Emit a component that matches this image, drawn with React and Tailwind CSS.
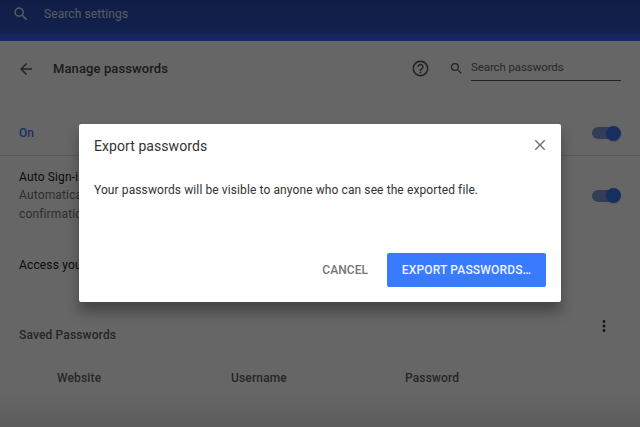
import {
  MdArrowBack,
  MdClose,
  MdHelpOutline,
  MdMoreVert,
  MdSearch,
} from "react-icons/md";

const Toggle = () => (
  <div className="flex h-4 w-[30px] items-center rounded-full">
    <div className="flex h-3 w-[28px] items-center justify-end rounded-full bg-[#8099d5]">
      <div className="-mr-[1px] size-[15px] shrink-0 rounded-full bg-[#3b75ee] shadow-sm" />
    </div>
  </div>
);

const SettingsPage = () => {
  return (
    <div className="h-[427px] bg-white text-[12px] text-[#222]">
      {/* Toolbar */}
      <header className="flex h-[34px] items-center bg-linear-to-b from-[#294ab0] to-[#2d52c0] pb-[6px] pl-3 text-[#dce3f5]">
        <MdSearch size={18} />
        <span className="ml-[14px] text-[12px] leading-none tracking-[0.1px]">Search settings</span>
      </header>
      <div className="h-[7px] bg-[#3a62ff]" />

      {/* Page title */}
      <div className="flex h-[55px] items-center pl-[17px] text-[#5a5a5a]">
        <MdArrowBack size={18} />
        <h1 className="ml-[18px] w-[359px] text-[13px] font-medium tracking-[0.1px] text-[#444]">
          Manage passwords
        </h1>
        <MdHelpOutline size={19} className="-ml-[1px]" />
        <MdSearch size={15} className="ml-[19px]" />
        <div className="ml-[7px] h-[24px] w-[150px] border-b-[1.5px] border-[#555] pt-[2px] text-[11.5px] leading-4 tracking-[-0.1px] text-[#666]">
          Search passwords
        </div>
      </div>

      <div className="flex h-[60px] items-end justify-between border-b border-[#e0e0e0] pr-[18px] pb-[14px] pl-[19px]">
        <span className="-mb-px leading-[18px] font-medium text-[#4279f4]">On</span>
        <Toggle />
      </div>

      <div className="flex h-[79px] items-center justify-between pr-[18px] pl-[19px]">
        <div className="leading-[18.5px] tracking-[0.15px]">
          <div>Auto Sign-i</div>
          <div className="text-[#757575]">Automatica</div>
          <div className="text-[#757575]">confirmatio</div>
        </div>
        <Toggle />
      </div>

      <div className="flex h-[60px] items-center pl-[19px] tracking-[0.15px]">Access you</div>

      {/* Saved passwords list */}
      <div className="flex h-[49px] items-end justify-between pr-[27px] pl-[19px] font-medium text-[#5f5f5f]">
        <span className="leading-[18px] tracking-[0.15px]">Saved Passwords</span>
        <MdMoreVert size={18} className="mb-[9px] text-[#444]" />
      </div>

      <div className="grid grid-cols-[174px_174px_1fr] pt-[25px] pl-[57px] leading-[18px] font-medium tracking-[0.15px] text-[#5f5f5f]">
        <span>Website</span>
        <span>Username</span>
        <span>Password</span>
      </div>
    </div>
  );
};

const ExportDialog = () => {
  return (
    <div className="mt-[124px] ml-[79px] flex h-[178px] w-[482px] flex-col rounded-[2px] bg-white shadow-[0_10px_13px_rgba(0,0,0,0.32)]">
      <div className="flex items-start justify-between pt-[12px] pr-[12px] pl-[15px]">
        <h2 className="pt-[1px] text-[14px] leading-[18px] tracking-[0.07px] text-[#333]">
          Export passwords
        </h2>
        <MdClose size={18} className="text-[#757575]" />
      </div>

      <p className="mt-[26px] pl-[15px] text-[12px] leading-[18px] tracking-[0.1px] text-[#333]">
        Your passwords will be visible to anyone who can see the exported file.
      </p>

      <div className="mt-auto mb-[15px] flex items-center justify-end gap-[19px] pr-[15px] text-[12px] font-medium">
        <button className="tracking-[0.05px] text-[#757575]">CANCEL</button>
        <button className="h-[34px] w-[159px] rounded-[2px] bg-[#387bff] tracking-[0.17px] text-[#eef3ff]">
          EXPORT PASSWORDS…
        </button>
      </div>
    </div>
  );
};

export default function App() {
  return (
    <div className="relative h-[427px] w-[640px] overflow-hidden font-['Roboto',sans-serif]">
      <SettingsPage />
      <div className="absolute inset-0 bg-black/60 bg-linear-to-t from-black/10 to-transparent to-8%">
        <ExportDialog />
      </div>
    </div>
  );
}
